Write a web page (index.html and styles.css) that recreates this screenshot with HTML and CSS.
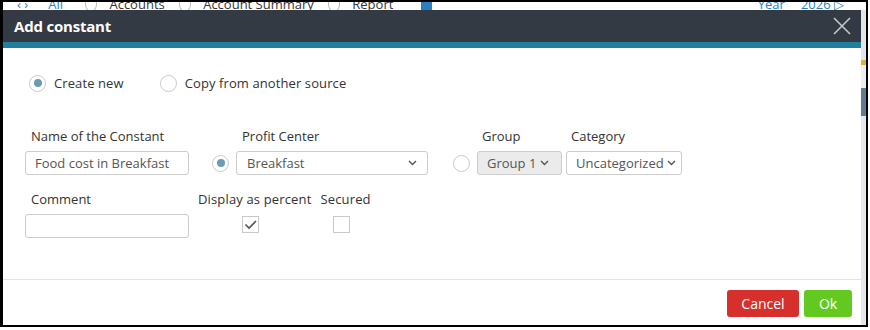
FILE: index.html
```
<!DOCTYPE html>
<html lang="en">
  <head>
    <meta charset="UTF-8" />
    <title>Add constant</title>
    <link rel="stylesheet" href="styles.css">
  </head>
  <body>
    <div class="frame">
      <div class="page-strip">
        <div class="page-nav">
          <span class="nav-item w-arrows">‹ ›</span>
          <span class="nav-item nav-all">All</span>
          <span class="nav-dot"></span>
          <span class="nav-item">Accounts</span>
          <span class="nav-dot"></span>
          <span class="nav-item">Account Summary</span>
          <span class="nav-dot"></span>
          <span class="nav-item">Report</span>
          <span class="nav-grid"></span>
          <span class="nav-year">Year</span>
          <span class="nav-item nav-all">2026 ▷</span>
        </div>
      </div>
      <div class="main">
        <div class="dialog">
          <div class="dlg-head">
            <h1>Add constant</h1>
            <button class="close" type="button">
              <svg width="18" height="18" viewBox="0 0 18 18">
                <path d="M1 1 L17 17 M17 1 L1 17" stroke="#c4c8cd" stroke-width="1.6" fill="none" />
              </svg>
            </button>
          </div>

          <div class="dlg-body">
            <div class="mode-row">
              <label class="opt"><span class="radio on"></span>Create new</label>
              <label class="opt"><span class="radio"></span>Copy from another source</label>
            </div>

            <div class="fields">
              <div class="field f-name">
                <div class="lbl">Name of the Constant</div>
                <div class="input">Food cost in Breakfast</div>
              </div>
              <div class="field f-profit">
                <div class="lbl">Profit Center</div>
                <div class="pick">
                  <span class="radio on"></span>
                  <div class="select s-profit">
                    <span>Breakfast</span>
                    <svg width="9" height="6" viewBox="0 0 9 6"><path d="M1 1 L4.5 4.5 L8 1" stroke="#555" stroke-width="1.4" fill="none" /></svg>
                  </div>
                </div>
              </div>
              <div class="field f-group">
                <div class="lbl">Group</div>
                <div class="pick">
                  <span class="radio"></span>
                  <div class="select s-group">
                    <span>Group 1</span>
                    <svg width="9" height="6" viewBox="0 0 9 6"><path d="M1 1 L4.5 4.5 L8 1" stroke="#555" stroke-width="1.4" fill="none" /></svg>
                  </div>
                </div>
              </div>
              <div class="field f-cat">
                <div class="lbl">Category</div>
                <div class="select s-cat">
                  <span>Uncategorized</span>
                  <svg width="9" height="6" viewBox="0 0 9 6"><path d="M1 1 L4.5 4.5 L8 1" stroke="#555" stroke-width="1.4" fill="none" /></svg>
                </div>
              </div>
            </div>

            <div class="fields second">
              <div class="field f-name">
                <div class="lbl">Comment</div>
                <div class="input"></div>
              </div>
              <div class="field f-check f-percent">
                <div class="lbl">Display as percent</div>
                <span class="check on">
                  <svg width="15" height="15" viewBox="0 0 15 15"><path d="M2.5 7.5 L6 11 L13 4" stroke="#555" stroke-width="1.6" fill="none" /></svg>
                </span>
              </div>
              <div class="field f-check f-secured">
                <div class="lbl">Secured</div>
                <span class="check"></span>
              </div>
            </div>
          </div>

          <div class="dlg-foot">
            <button class="btn btn-cancel" type="button">Cancel</button>
            <button class="btn btn-ok" type="button">Ok</button>
          </div>
        </div>
        <div class="side-strip"></div>
      </div>
    </div>
  </body>
</html>
```

FILE: styles.css
```
body {
  margin: 0;
  padding: 0;
  background: #ffffff;
  font-family: "Open Sans", "Liberation Sans", sans-serif;
  font-size: 13px;
  color: #333333;
}

.frame {
  width: 868px;
  height: 327px;
  box-sizing: border-box;
  border: 2px solid #000000;
  border-left-width: 3px;
  display: flex;
  flex-direction: column;
  overflow: hidden;
}

/* the page behind the dialog, mostly hidden */
.page-strip {
  height: 8px;
  overflow: hidden;
  background: #ffffff;
}
.page-nav {
  display: flex;
  align-items: center;
  height: 18px;
  margin-top: -7px;
  white-space: nowrap;
  color: #333333;
}
.nav-item {
  margin-right: 14px;
}
.w-arrows {
  margin-left: 14px;
  margin-right: 20px;
  color: #2a7fc0;
}
.nav-all {
  color: #2a7fc0;
  margin-right: 22px;
}
.nav-dot {
  width: 14px;
  height: 14px;
  border: 1px solid #bbbbbb;
  border-radius: 50%;
  margin-right: 12px;
}
.nav-grid {
  width: 14px;
  height: 12px;
  background: #2a7fc0;
  margin-left: 14px;
}
.nav-year {
  margin-left: 326px;
  margin-right: 16px;
  color: #2a7fc0;
}

.main {
  flex: 1;
  display: flex;
}

.dialog {
  width: 858px;
  background: #ffffff;
  display: flex;
  flex-direction: column;
}

.side-strip {
  flex: 1;
  background: linear-gradient(
    to bottom,
    #e2e4e6 0px,
    #e2e4e6 50px,
    #e3b12c 50px,
    #e3b12c 55px,
    #eceef0 55px,
    #eceef0 78px,
    #5d7d93 78px,
    #5d7d93 106px,
    #e4e8ec 106px
  );
}

.dlg-head {
  height: 32px;
  background: #343a44;
  border-bottom: 6px solid #1f7f9c;
  display: flex;
  align-items: center;
  justify-content: space-between;
  padding: 0 10px 0 11px;
}
.dlg-head h1 {
  margin: 0;
  color: #ffffff;
  font-size: 15px;
  font-weight: 700;
  letter-spacing: -0.2px;
}
.close {
  background: none;
  border: none;
  padding: 0;
  width: 18px;
  height: 18px;
  cursor: pointer;
}

.dlg-body {
  flex: 1;
  padding: 26px 0 0 22px;
  border-bottom: 1px solid #e4e4e4;
}

.mode-row {
  display: flex;
  gap: 36px;
  padding-left: 4px;
  height: 18px;
  align-items: center;
}
.opt {
  display: flex;
  align-items: center;
  gap: 8px;
  letter-spacing: 0.1px;
}

.radio {
  width: 17px;
  height: 17px;
  box-sizing: border-box;
  border: 1px solid #c9c9c9;
  border-radius: 50%;
  background: #ffffff;
  display: inline-flex;
  align-items: center;
  justify-content: center;
  flex-shrink: 0;
}
.radio.on::after {
  content: "";
  width: 8px;
  height: 8px;
  border-radius: 50%;
  background: #6b9db2;
}

.fields {
  display: flex;
  margin-top: 35px;
}
.fields.second {
  margin-top: 15px;
}
.field {
  display: flex;
  flex-direction: column;
}
.lbl {
  line-height: 18px;
  height: 18px;
  margin-bottom: 6px;
  padding-left: 6px;
  white-space: nowrap;
}

.input {
  width: 164px;
  height: 24px;
  box-sizing: border-box;
  border: 1px solid #cccccc;
  border-radius: 3px;
  padding: 0 9px;
  line-height: 22px;
  color: #555555;
}

.pick {
  display: flex;
  align-items: center;
  gap: 7px;
}

.f-profit {
  margin-left: 23px;
}
.f-profit .lbl {
  padding-left: 30px;
}
.f-group {
  margin-left: 25px;
}
.f-group .lbl {
  padding-left: 29px;
}
.f-cat {
  margin-left: 4px;
}
.f-cat .lbl {
  padding-left: 5px;
}

.select {
  height: 24px;
  box-sizing: border-box;
  border: 1px solid #cccccc;
  border-radius: 3px;
  display: flex;
  align-items: center;
  justify-content: space-between;
  color: #555555;
  background: #ffffff;
}
.s-profit {
  width: 192px;
  padding: 0 10px 0 10px;
}
.s-group {
  width: 85px;
  padding: 0 12px 0 9px;
  background: #ebebeb;
}
.s-cat {
  width: 116px;
  padding: 0 5px 0 9px;
}

.f-check {
  align-items: center;
}
.f-check .lbl {
  padding-left: 0;
  margin-bottom: 8px;
  letter-spacing: 0.15px;
}
.f-percent {
  margin-left: 9px;
}
.f-secured {
  margin-left: 9px;
}
.check {
  width: 17px;
  height: 17px;
  box-sizing: border-box;
  border: 1px solid #c9c9c9;
  display: inline-flex;
  align-items: center;
  justify-content: center;
  margin-right: 8px;
}

.dlg-foot {
  height: 45px;
  display: flex;
  justify-content: flex-end;
  align-items: flex-start;
  gap: 5px;
  padding: 10px 9px 0 0;
  box-sizing: border-box;
}
.btn {
  height: 27px;
  border: none;
  border-radius: 3px;
  color: #ffffff;
  font-family: "Open Sans", "Liberation Sans", sans-serif;
  font-size: 14px;
  padding: 0;
  cursor: pointer;
}
.btn-cancel {
  width: 72px;
  background: #d72f2c;
}
.btn-ok {
  width: 48px;
  background: #63c920;
}
```
